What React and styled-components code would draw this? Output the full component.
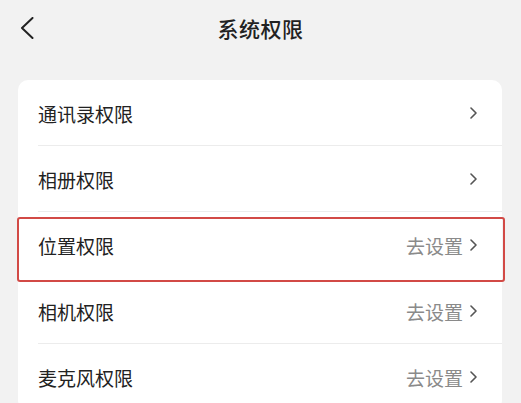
import React from 'react';
import styled, { createGlobalStyle } from 'styled-components';

const GlobalStyle = createGlobalStyle`
  html, body {
    margin: 0;
    padding: 0;
    background: #f2f2f2;
  }
  body {
    font-family: "Noto Sans CJK SC", "Noto Sans", sans-serif;
    color: #222;
  }
`;

const Page = styled.div`
  width: 521px;
  height: 403px;
  overflow: hidden;
  background: #f2f2f2;
`;

const Header = styled.div`
  position: relative;
  height: 56px;
  display: flex;
  align-items: center;
  justify-content: center;
`;

const BackButton = styled.div`
  position: absolute;
  left: 20px;
  top: 17px;
  width: 14px;
  height: 22px;
  display: flex;
`;

const Title = styled.div`
  font-size: 21px;
  font-weight: 500;
  letter-spacing: 0.5px;
  color: #222;
`;

const Card = styled.div`
  margin: 24px 19px 0 18px;
  background: #fff;
  border-radius: 10px;
`;

const Row = styled.div`
  position: relative;
  height: 66px;
  display: flex;
  align-items: center;
  padding: 0 25px 0 20px;
  &:not(:last-child)::after {
    content: '';
    display: ${p => (p.$marked ? 'none' : 'block')};
    position: absolute;
    left: 20px;
    right: 0;
    bottom: 0;
    height: 1px;
    background: #ececec;
  }
`;

const Label = styled.div`
  flex: 1;
  font-size: 19px;
  color: #222;
`;

const Action = styled.div`
  font-size: 19px;
  color: #8a8a8a;
  margin-right: 7px;
`;

const Chevron = styled.svg`
  width: 7px;
  height: 12px;
  display: block;
`;

const Highlight = styled.div`
  position: absolute;
  left: -1px;
  right: -3px;
  top: 5px;
  height: 65px;
  box-sizing: border-box;
  border: 2px solid #d24a46;
  border-radius: 3px;
  z-index: 1;
  pointer-events: none;
`;

const items = [
  { label: '通讯录权限' },
  { label: '相册权限' },
  { label: '位置权限', action: '去设置', marked: true },
  { label: '相机权限', action: '去设置' },
  { label: '麦克风权限', action: '去设置' },
];

export default function App() {
  return (
    <Page>
      <GlobalStyle />
      <Header>
        <BackButton>
          <svg width="14" height="22" viewBox="0 0 14 22">
            <polyline points="12.5,1 2,11 12.5,21" fill="none" stroke="#222" strokeWidth="2" strokeLinecap="round" strokeLinejoin="round" />
          </svg>
        </BackButton>
        <Title>系统权限</Title>
      </Header>
      <Card>
        {items.map(item => (
          <Row key={item.label} $marked={item.marked}>
            <Label>{item.label}</Label>
            {item.action && <Action>{item.action}</Action>}
            <Chevron viewBox="0 0 7 12">
              <polyline points="1,1 6,6 1,11" fill="none" stroke="#555" strokeWidth="1.6" strokeLinecap="round" strokeLinejoin="round" />
            </Chevron>
            {item.marked && <Highlight />}
          </Row>
        ))}
      </Card>
    </Page>
  );
}
